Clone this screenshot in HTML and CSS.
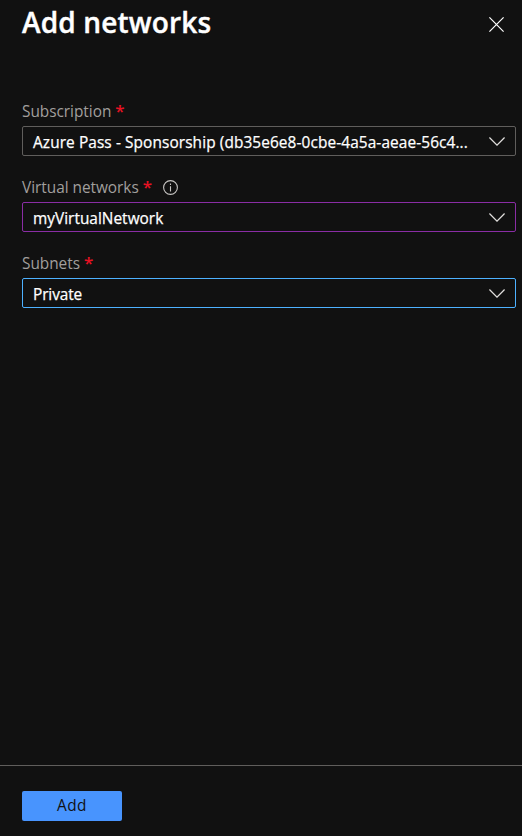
FILE: index.html
```html
<!DOCTYPE html>
<html lang="en">
<head>
<meta charset="utf-8">
<title>Add networks</title>
<link rel="stylesheet" href="styles.css">
</head>
<body>
<main class="panel">
  <header class="header">
    <h1 class="title">Add networks</h1>
    <svg class="close" width="15" height="15" viewBox="0 0 15 15" aria-label="Close"><path d="M.4.4l14.2 14.2M14.6.4L.4 14.6"/></svg>
  </header>
  <section class="form">
    <div class="field">
      <div class="label"><span class="name subscription">Subscription</span><span class="required">*</span></div>
      <div class="select"><span class="value account">Azure Pass - Sponsorship (db35e6e8-0cbe-4a5a-aeae-56c4...</span><svg class="chevron" width="16" height="9" viewBox="0 0 16 9"><path d="M.4.5L8 8.1 15.6.5"/></svg></div>
    </div>
    <div class="field">
      <div class="label"><span class="name networks">Virtual networks</span><span class="required">*</span><svg class="info" width="15" height="15" viewBox="0 0 15 15"><circle cx="7.5" cy="7.5" r="6.9"/><path d="M7.5 6.2v5.2M7.5 3.6v1.3"/></svg></div>
      <div class="select edited"><span class="value network">myVirtualNetwork</span><svg class="chevron" width="16" height="9" viewBox="0 0 16 9"><path d="M.4.5L8 8.1 15.6.5"/></svg></div>
    </div>
    <div class="field">
      <div class="label"><span class="name subnets">Subnets</span><span class="required">*</span></div>
      <div class="select focused"><span class="value subnet">Private</span><svg class="chevron" width="16" height="9" viewBox="0 0 16 9"><path d="M.4.5L8 8.1 15.6.5"/></svg></div>
    </div>
  </section>
  <footer class="footer"><button class="add">Add</button></footer>
</main>
</body>
</html>
```
FILE: styles.css
```css
* { box-sizing: border-box; }
body { margin: 0; background: #111; color: #fff; font: 15.4px/20px "Open Sans", "Noto Sans", sans-serif; }
.panel { display: flex; flex-direction: column; height: 836px; }
.header { display: flex; justify-content: space-between; height: 101px; padding: 0 18px 0 22px; }
.title { margin: 3px 0 0; font-size: 28px; line-height: 38px; font-weight: 600; letter-spacing: .17px; -webkit-text-stroke: .4px #fff; }
.close { margin-top: 17px; fill: none; stroke: #fff; stroke-width: 1.2; }
.form { flex: 1; padding: 0 6px 0 22px; }
.field { height: 76px; }
.label { display: flex; height: 25px; color: #a19f9d; white-space: nowrap; }
.name { padding-top: 1px; letter-spacing: -.03px; }
.required { margin-left: 4px; color: #e81123; font-size: 17px; font-weight: 600; line-height: 19px; }
.info { margin: 3px 0 0 11px; fill: none; stroke: #c8c6c4; stroke-width: 1.1; }
.select { display: flex; align-items: center; justify-content: space-between; height: 30px; padding: 0 10px; border: 1px solid #605e5c; border-radius: 2px; white-space: nowrap; }
.edited { border-color: #8a2da5; }
.focused { border-color: #4db1ff; }
.value { padding-top: 3px; -webkit-text-stroke: .25px #fff; }
.account { letter-spacing: .1px; }
.network { letter-spacing: .02px; }
.subnet { letter-spacing: -.1px; }
.chevron { margin-top: 1px; fill: none; stroke: #e1dfdd; stroke-width: 1.3; }
.footer { height: 71px; padding: 25px 22px 0; border-top: 1px solid #605e5c; }
.add { display: block; width: 100px; height: 30px; padding: 0; border: 0; border-radius: 2px; background: #4894fe; color: #111; font: inherit; letter-spacing: .4px; }
```
